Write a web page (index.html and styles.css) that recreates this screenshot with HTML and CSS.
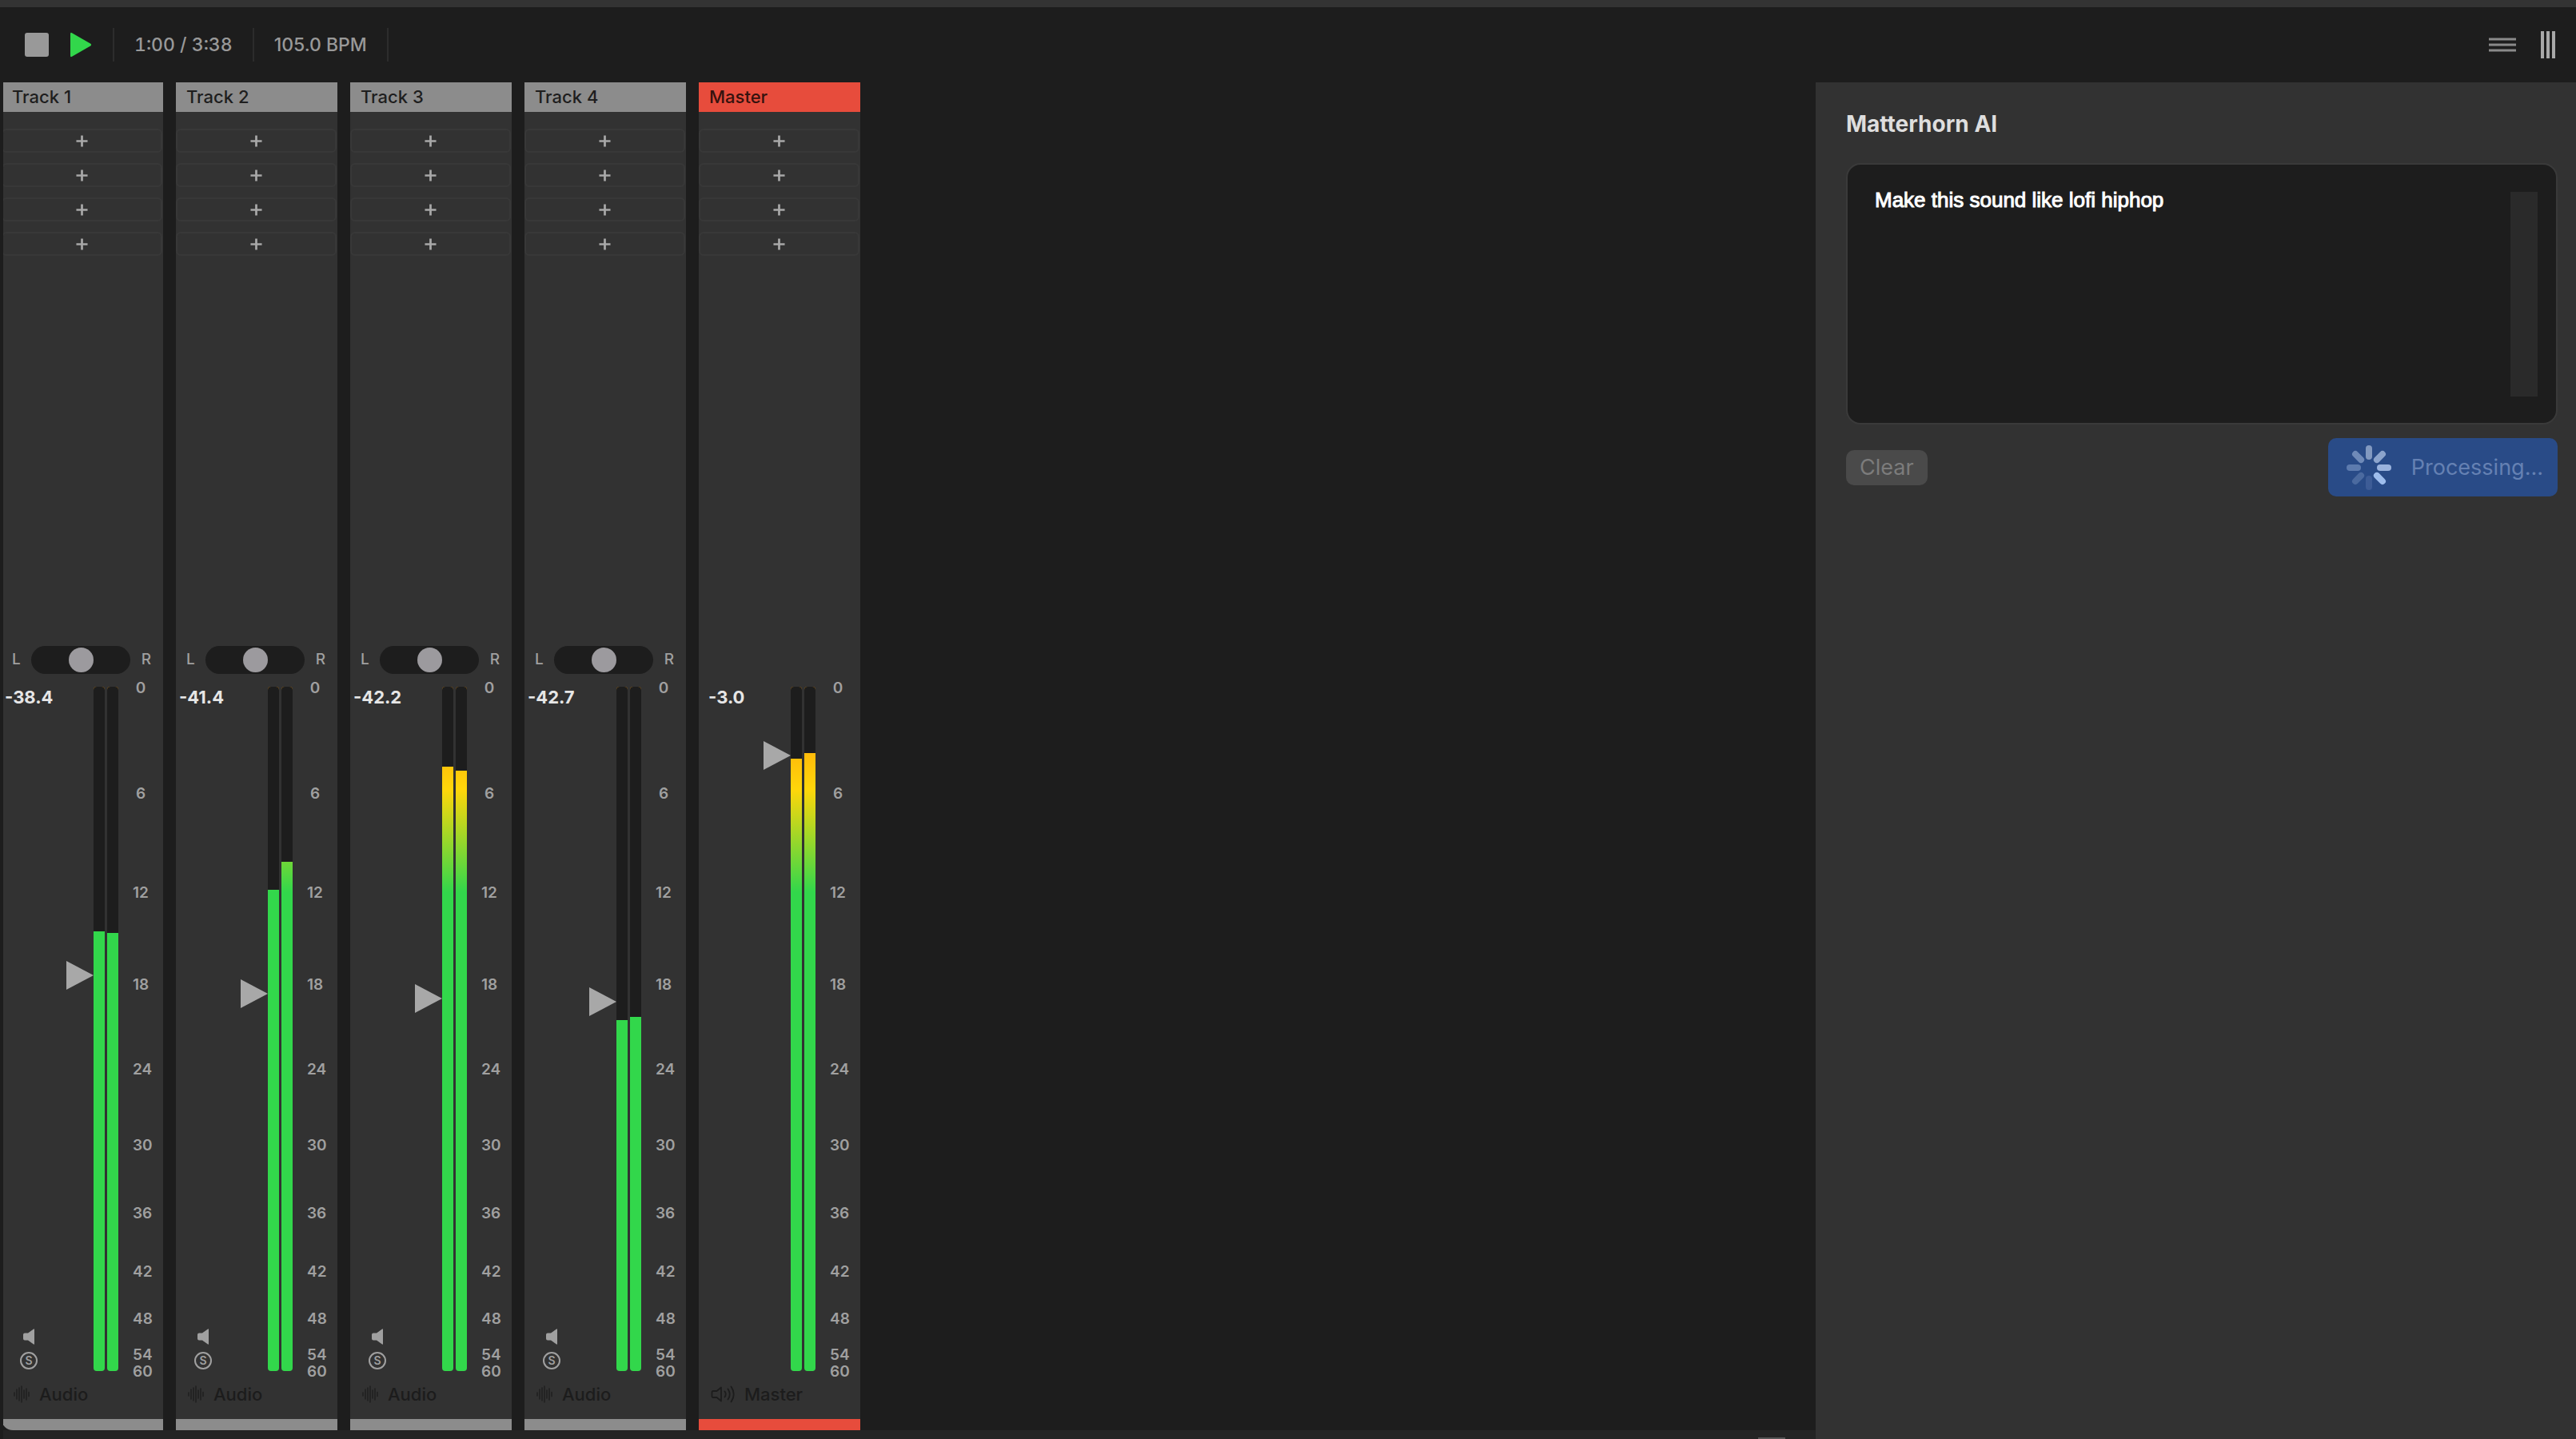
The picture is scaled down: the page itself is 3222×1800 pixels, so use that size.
FILE: index.html
```html
<!DOCTYPE html>
<html lang="en">
<head>
<meta charset="utf-8">
<title>Matterhorn</title>
<link rel="stylesheet" href="styles.css">
</head>
<body>
<svg class="defs" aria-hidden="true">
  <symbol id="plus" viewBox="0 0 16 16"><path d="M8 0.500v15M0.500 8h15" stroke="currentColor" stroke-width="2.900"/></symbol>
  <symbol id="thumb" viewBox="0 0 34 36"><path d="M0 0L34 18L0 36z" fill="currentColor"/></symbol>
  <symbol id="mute" viewBox="0 0 16 20"><path d="M15 1v18q0 1-1 0.500L7 14.500H3Q1 14.500 1 12.500v-5Q1 5.500 3 5.500h4L14 0.500q1-.5 1 .5z" fill="currentColor"/></symbol>
  <symbol id="wave" viewBox="0 0 20 22"><path d="M1 9v4M4 5v12M7 3v16M10 1v20M13 6v10M16 4v14M19 8.500v5" stroke="currentColor" stroke-width="1.300" stroke-linecap="round"/></symbol>
  <symbol id="speaker" viewBox="0 0 30 22"><path d="M13 2.500v17L7.500 15H3Q1.500 15 1.500 13.500v-5Q1.500 7 3 7h4.500zM17.500 7.500q2.500 3.500 0 7M21.500 4.500q4.500 6.500 0 13M25.500 1.500q6.500 9.500 0 19" fill="none" stroke="currentColor" stroke-width="1.800" stroke-linecap="round" stroke-linejoin="round"/></symbol>
</svg>
<div class="app">
  <header class="toolbar">
    <button class="icon-btn stop" aria-label="Stop"><svg width="30" height="30" viewBox="0 0 30 30"><rect width="30" height="30" rx="3" fill="#999"/></svg></button>
    <button class="icon-btn play" aria-label="Play"><svg width="28" height="32" viewBox="0 0 28 32"><path d="M1 2.500Q1 0 3 1.200L26.500 14.800Q28 16 26.500 17.200L3 30.800Q1 32 1 29.500z" fill="#32d74b"/></svg></button>
    <span class="readout time">1:00 / 3:38</span>
    <span class="readout tempo">105.0 BPM</span>
    <div class="views">
      <button class="icon-btn" aria-label="List view"><svg width="34" height="18" viewBox="0 0 34 18"><path d="M0 2h34M0 9h34M0 16h34" stroke="#8a8a8a" stroke-width="3"/></svg></button>
      <button class="icon-btn" aria-label="Mixer view"><svg width="18" height="34" viewBox="0 0 18 34"><path d="M2 0v34M9 0v34M16 0v34" stroke="#a8a8a8" stroke-width="4"/></svg></button>
    </div>
  </header>
  <main class="workspace">
    <div class="stage">
      <div class="mixer" id="mixer"></div>
      <div class="dock"><div class="grabber"></div></div>
    </div>
    <aside class="assistant">
      <h1><label for="prompt">Matterhorn AI</label></h1>
      <div class="prompt-box">
        <textarea id="prompt">Make this sound like lofi hiphop</textarea>
        <div class="scroll-track"></div>
      </div>
      <div class="actions">
        <button class="clear" disabled>Clear</button>
        <button class="submit" disabled>
          <svg width="56" height="56" viewBox="-28 -28 56 56" stroke-width="8" stroke-linecap="round">
            <path d="M0 -14V-24" stroke="#8299c0"/>
            <path d="M0 -14V-24" stroke="#8ca4cc" transform="rotate(45)"/>
            <path d="M0 -14V-24" stroke="#9ab3dd" transform="rotate(90)"/>
            <path d="M0 -14V-24" stroke="#9ebdec" transform="rotate(135)"/>
            <path d="M0 -14V-24" stroke="#3d5c96" transform="rotate(180)"/>
            <path d="M0 -14V-24" stroke="#4b6a9f" transform="rotate(225)"/>
            <path d="M0 -14V-24" stroke="#5d7bae" transform="rotate(270)"/>
            <path d="M0 -14V-24" stroke="#6f8ab8" transform="rotate(315)"/>
          </svg>
          <span>Processing...</span>
        </button>
      </div>
    </aside>
  </main>
</div>
<script src="mixer.js"></script>
</body>
</html>
```
FILE: styles.css
```css
* { box-sizing: border-box; }
body {
  margin: 0;
  background: #1d1d1d;
  color: #a0a0a0;
  font: 500 20px/24px Inter, "Liberation Sans", sans-serif;
}
button { border: 0; padding: 0; background: none; color: inherit; font: inherit; }
svg { display: block; }
.defs { position: absolute; width: 0; height: 0; }

.app {
  display: flex;
  flex-direction: column;
  min-height: 100vh;
  padding-left: 4px;
  border-top: 9px solid #333;
}

.toolbar {
  display: flex;
  align-items: center;
  height: 94px;
  padding: 0 26px 0 27px;
}
.play { margin: 0 26px; }
.readout {
  height: 42px;
  padding: 0 25px;
  border-left: 2px solid #2c2c2c;
  color: #999;
  font-size: 23px;
  line-height: 42px;
}
.time { font-variant-numeric: tabular-nums; }
.tempo { border-right: 2px solid #2c2c2c; }
.views { display: flex; align-items: center; gap: 31px; margin-left: auto; }

.workspace { display: flex; flex: 1; }
.stage { display: flex; flex: 1; flex-direction: column; overflow: hidden; }
.dock {
  display: flex;
  align-items: flex-end;
  justify-content: flex-end;
  height: 11px;
  padding-right: 38px;
  background: #242424;
}
.grabber { width: 34px; height: 2px; background: #555; }
.mixer { display: flex; flex: 1; gap: 16px; margin-left: -2px; }

.strip {
  display: flex;
  flex-direction: column;
  width: 202px;
  background: #323232;
  border-bottom: 14px solid #8c8c8c;
}
.strip:first-child { border-bottom-left-radius: 14px; }
.strip h2 {
  margin: 0;
  padding: 0 13px;
  background: #8c8c8c;
  color: #1e1e1e;
  font-size: 22px;
  font-weight: 500;
  line-height: 37px;
}
.strip.master { border-bottom-color: #e74c3c; }
.strip.master h2 { background: #e74c3c; color: #36120e; }

.slots { display: flex; flex-direction: column; gap: 13px; padding: 21px 1px 0 0; }
.slot {
  display: grid;
  place-items: center;
  height: 30px;
  border: 2px solid #383838;
  border-radius: 6px;
  color: #a8a8a8;
}

.pan {
  display: flex;
  align-items: center;
  justify-content: space-between;
  height: 36px;
  margin-top: auto;
  padding: 0 15px 0 13px;
  font-size: 19px;
}
.pan input {
  appearance: none;
  width: 124px;
  height: 35px;
  margin: 0;
  padding: 0 2px;
  border-radius: 18px;
  background: #1d1d1d;
}
.pan input::-webkit-slider-thumb {
  appearance: none;
  width: 31px;
  height: 31px;
  border-radius: 50%;
  background: #9c9a9e;
}

.fader { display: flex; height: 856px; margin-top: 16px; }
.channel {
  display: flex;
  flex-direction: column;
  justify-content: space-between;
  position: relative;
  width: 115px;
}
.gain { padding-left: 4px; color: #e6e6e6; font-size: 22px; font-weight: 700; line-height: 27px; }
.master .gain { padding-left: 12px; }
.thumb { position: absolute; right: 0; width: 34px; height: 36px; margin-top: -18px; color: #a8a8a8; }
.toggles { display: grid; justify-items: center; gap: 9px; width: 22px; margin: 0 0 2px 23px; }
.solo {
  width: 22px;
  height: 22px;
  border: 2px solid #a0a0a0;
  border-radius: 50%;
  font-size: 14px;
  font-weight: 600;
  line-height: 18px;
}
.meters { display: flex; gap: 3px; width: 31px; }
.meter {
  flex: 1;
  border-radius: 4px;
  background: linear-gradient(#ff9f0a 4%, #ffd60a 15%, #32d74b 30%);
  overflow: hidden;
}
.meter div { background: #1d1d1d; }
.scale { position: relative; flex: 1; margin: 0 18px; }
.scale span { position: absolute; left: 0; right: 0; margin-top: -11px; text-align: center; font-size: 19px; font-weight: 600; }

.kind {
  display: flex;
  align-items: center;
  gap: 12px;
  height: 60px;
  padding: 0 15px 2px;
  color: #1c1c1c;
  font-size: 22px;
}

.assistant { width: 951px; padding: 35px 23px 0 38px; background: #323232; }
.assistant h1 { margin: 0 0 32px; color: #dedede; font-size: 28px; font-weight: 700; line-height: 34px; }
.prompt-box {
  display: flex;
  height: 327px;
  padding: 29px 23px 32px 34px;
  border: 2px solid #3a3a3a;
  border-radius: 18px;
  background: #1d1d1d;
}
.prompt-box textarea {
  flex: 1;
  padding: 0;
  border: 0;
  outline: 0;
  resize: none;
  background: none;
  color: #fff;
  font: 26px/30px "Liberation Sans", Arial, sans-serif;
  -webkit-text-stroke: 1px #fff;
}
.scroll-track { width: 34px; margin: 5px 0 1px; background: #2a2a2a; }
.actions { display: flex; justify-content: space-between; align-items: center; margin-top: 17px; font-size: 27px; font-weight: 400; }
.clear { height: 44px; padding: 0 17px; border-radius: 10px; background: #4a4a4a; color: #7c7c7c; }
.submit {
  display: flex;
  align-items: center;
  gap: 25px;
  height: 73px;
  padding: 0 18px 0 23px;
  border-radius: 10px;
  background: #294b87;
  color: #6581b3;
}
```
FILE: mixer.js
```js
const FADER_HEIGHT = 856;
// dB mark -> distance from the top of the fader
const MARKS = [[0, 1], [6, 133], [12, 257], [18, 372], [24, 478], [30, 573], [36, 658], [42, 731], [48, 790], [54, 835], [60, 856]];
const TRACKS = [
  { name: 'Track 1', gain: '-38.4', thumb: 361, levels: [306, 308] },
  { name: 'Track 2', gain: '-41.4', thumb: 384, levels: [254, 219] },
  { name: 'Track 3', gain: '-42.2', thumb: 390, levels: [100, 105] },
  { name: 'Track 4', gain: '-42.7', thumb: 394, levels: [417, 413] },
  { name: 'Master', gain: '-3.0', thumb: 86, levels: [90, 83], master: true }
];
const pct = v => (v / FADER_HEIGHT * 100).toFixed(2) + '%';
const icon = (id, w, h, cls = '') => `<svg class="${cls}" width="${w}" height="${h}"><use href="#${id}"/></svg>`;

document.getElementById('mixer').innerHTML = TRACKS.map(t => `
  <section class="strip ${t.master ? 'master' : ''}">
    <h2>${t.name}</h2>
    <div class="slots">${`<button class="slot" aria-label="Add effect">${icon('plus', 15, 15)}</button>`.repeat(4)}</div>
    <div class="pan">${t.master ? '' : `<span>L</span><input type="range" aria-label="${t.name} pan"><span>R</span>`}</div>
    <div class="fader">
      <div class="channel">
        <span class="gain">${t.gain}</span>
        <svg class="thumb" style="top:${pct(t.thumb)}"><use href="#thumb"/></svg>
        ${t.master ? '' : `<div class="toggles"><button aria-label="Mute">${icon('mute', 16, 20)}</button><button class="solo" aria-label="Solo">S</button></div>`}
      </div>
      <div class="meters">${t.levels.map(l => `<div class="meter"><div style="height:${pct(l)}"></div></div>`).join('')}</div>
      <div class="scale">${MARKS.map(([db, y]) => `<span style="top:${pct(y)}">${db}</span>`).join('')}</div>
    </div>
    <div class="kind">${t.master ? icon('speaker', 30, 22) + 'Master' : icon('wave', 20, 22) + 'Audio'}</div>
  </section>`).join('');
```
